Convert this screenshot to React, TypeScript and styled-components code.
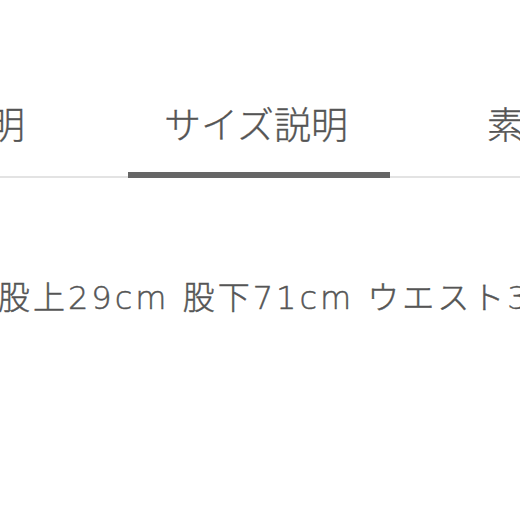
import React from "react";
import styled, { createGlobalStyle } from "styled-components";

const Global = createGlobalStyle`
  html, body { margin: 0; padding: 0; background: #ffffff; }
  body { font-family: "Noto Sans CJK JP", "Noto Sans", sans-serif; }
`;

const Page = styled.div`
  width: 520px;
  height: 520px;
  overflow: hidden;
  background: #ffffff;
  padding-top: 105px;
  box-sizing: border-box;
`;

const TabBar = styled.div`
  display: flex;
  gap: 61px;
  margin-left: -159px;
  width: 900px;
  box-shadow: inset 0 -2px 0 #e3e3e3;
`;

const Tab = styled.div<{ $active?: boolean }>`
  flex: none;
  padding: 0 42px 30px 36px;
  font-size: 37px;
  font-weight: 300;
  line-height: 37px;
  color: #555555;
  -webkit-text-stroke: 0.35px #555555;
  white-space: nowrap;
  border-bottom: 6px solid ${(p) => (p.$active ? "#666666" : "transparent")};
`;

const Body = styled.div`
  margin-top: 102px;
  margin-left: -2px;
  font-family: "DejaVu Sans", "Noto Sans CJK JP", sans-serif;
  font-size: 32px;
  font-weight: 300;
  line-height: 36px;
  letter-spacing: 3px;
  color: #555555;
  -webkit-text-stroke: 0.45px #555555;
  white-space: nowrap;
`;

export default function App() {
  return (
    <>
      <Global />
      <Page>
        <TabBar>
          <Tab>商品説明</Tab>
          <Tab $active>サイズ説明</Tab>
          <Tab>素材説明</Tab>
        </TabBar>
        <Body>股上29cm 股下71cm ウエスト38cm</Body>
      </Page>
    </>
  );
}
